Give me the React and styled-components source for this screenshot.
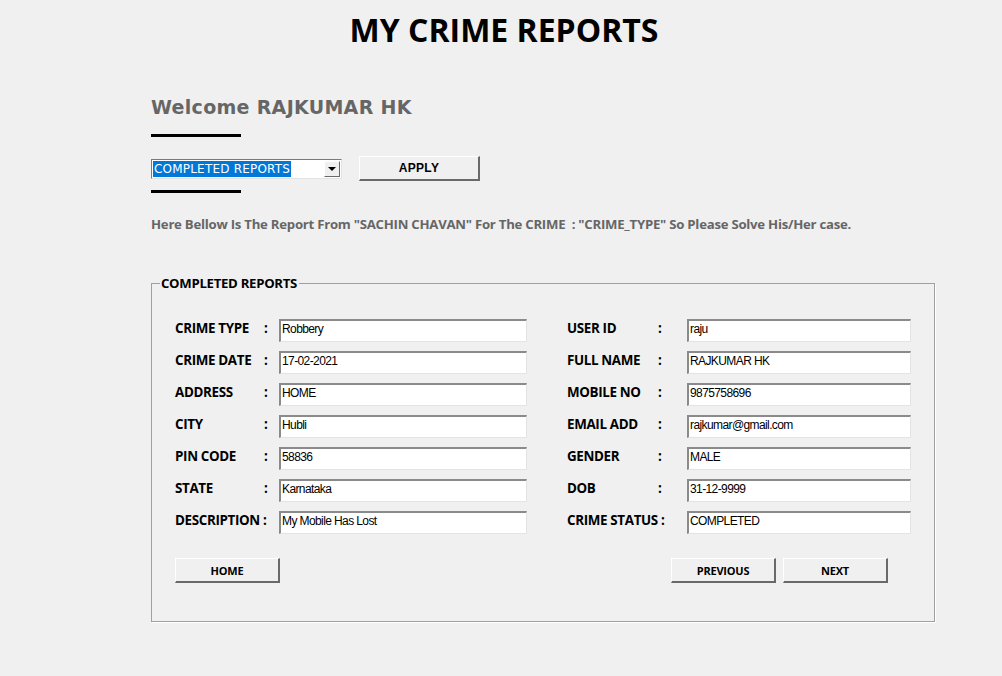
import React from 'react'
import styled, { createGlobalStyle } from 'styled-components'

const GlobalStyle = createGlobalStyle`
  html, body {
    margin: 0;
    padding: 0;
    background: #f0f0f0;
  }
  body {
    width: 1002px;
    height: 676px;
    overflow: hidden;
    font-family: 'Open Sans', 'Noto Sans', sans-serif;
  }
`

const Page = styled.div`
  display: flex;
  flex-direction: column;
  padding: 8px 0 0 151px;
`

const Title = styled.h1`
  margin: 0 0 0 -151px;
  text-align: center;
  font-family: 'Open Sans', sans-serif;
  font-weight: 700;
  font-size: 32px;
  line-height: 44px;
  color: #000;
  padding-left: 6px;
`

const Welcome = styled.h2`
  margin: 44px 0 0 0;
  font-family: 'DejaVu Sans', Verdana, sans-serif;
  font-weight: 700;
  font-size: 19px;
  letter-spacing: 0.3px;
  line-height: 22px;
  color: #666666;
`

const Rule = styled.div`
  width: 90px;
  height: 3px;
  background: #000;
  margin-top: ${p => p.$top}px;
`

const FilterRow = styled.div`
  display: flex;
  align-items: center;
  gap: 17px;
  margin-top: 19px;
`

const Select = styled.div`
  width: 191px;
  height: 20px;
  box-sizing: border-box;
  border: 1px solid #7a7a7a;
  border-right-color: #e3e3e3;
  border-bottom-color: #e3e3e3;
  background: #fff;
  display: flex;
  align-items: center;
  padding: 1px;
`

const Selected = styled.span`
  flex: 1;
  display: flex;
  align-items: center;
  height: 100%;
  span {
    background: #0078d7;
    color: #fff;
    font-family: 'DejaVu Sans', Tahoma, sans-serif;
    font-size: 12px;
    letter-spacing: 0.2px;
    line-height: 16px;
    padding: 0 1px;
  }
`

const Arrow = styled.span`
  width: 16px;
  height: 16px;
  box-sizing: border-box;
  background: #f0f0f0;
  border: 1px solid #fff;
  border-right-color: #696969;
  border-bottom-color: #696969;
  display: flex;
  align-items: center;
  justify-content: center;
  &::after {
    content: '';
    border-left: 4px solid transparent;
    border-right: 4px solid transparent;
    border-top: 4px solid #000;
  }
`

const Button = styled.button`
  width: ${p => p.$w || 105}px;
  height: 25px;
  box-sizing: border-box;
  background: #f0f0f0;
  border: 1px solid #fff;
  border-right: 2px solid #696969;
  border-bottom: 2px solid #696969;
  padding: 0;
  color: #000;
  font-family: ${p => p.$plain ? "'Liberation Sans', Arial, sans-serif" : "'Open Sans', sans-serif"};
  font-weight: 700;
  font-size: ${p => p.$plain ? 12 : 11}px;
  letter-spacing: ${p => p.$plain ? 0.3 : -0.2}px;
  cursor: pointer;
`

const Note = styled.p`
  margin: 22px 0 0 0;
  font-family: 'Open Sans', sans-serif;
  font-weight: 700;
  font-size: 13.2px;
  letter-spacing: -0.25px;
  color: #666666;
  line-height: 18px;
`

const Group = styled.fieldset`
  margin: 41px 0 0 0;
  width: 784px;
  box-sizing: border-box;
  border: 1px solid #a0a0a0;
  box-shadow: 1px 1px 0 #fff;
  padding: 27px 23px 38px 23px;
  min-inline-size: 0;
`

const Legend = styled.legend`
  margin-left: -15px;
  padding: 0 2px 0 1px;
  font-family: 'Open Sans', sans-serif;
  font-weight: 700;
  font-size: 13.2px;
  letter-spacing: -0.3px;
  color: #000;
`

const Columns = styled.div`
  display: flex;
  gap: 40px;
`

const Column = styled.div`
  display: grid;
  grid-template-columns: ${p => p.$cols};
  row-gap: 9px;
  align-items: center;
`

const Label = styled.span`
  font-family: 'Open Sans', sans-serif;
  font-weight: 700;
  font-size: 13.4px;
  letter-spacing: -0.35px;
  color: #000;
  white-space: nowrap;
  line-height: 16px;
  margin-top: -6px;
`

const Colon = styled(Label)`
  margin-left: -2px;
`

const Field = styled.div`
  height: 23px;
  box-sizing: border-box;
  background: #fff;
  border: 1px solid #e3e3e3;
  border-top: 2px solid #8a8a8a;
  border-left: 2px solid #8a8a8a;
  padding: 0 0 0 1px;
  font-family: 'Liberation Sans', Arial, sans-serif;
  font-size: 12px;
  letter-spacing: -0.6px;
  color: #000;
  line-height: 16px;
  white-space: nowrap;
  overflow: hidden;
`

const Actions = styled.div`
  display: flex;
  margin-top: 24px;
`

const Spacer = styled.div`
  flex: 1;
`

const RightButtons = styled.div`
  display: flex;
  gap: 7px;
  margin-right: 23px;
`

const left = [
  ['CRIME TYPE', 'Robbery'],
  ['CRIME DATE', '17-02-2021'],
  ['ADDRESS', 'HOME'],
  ['CITY', 'Hubli'],
  ['PIN CODE', '58836'],
  ['STATE', 'Karnataka'],
  ['DESCRIPTION :', 'My Mobile Has Lost', true],
]

const right = [
  ['USER ID', 'raju'],
  ['FULL NAME', 'RAJKUMAR HK'],
  ['MOBILE NO', '9875758696'],
  ['EMAIL ADD', 'rajkumar@gmail.com'],
  ['GENDER', 'MALE'],
  ['DOB', '31-12-9999'],
  ['CRIME STATUS :', 'COMPLETED', true],
]

const Rows = ({ rows }) =>
  rows.map(([label, value, inline]) => (
    <React.Fragment key={label}>
      {inline ? (
        <Label style={{ gridColumn: 'span 2' }}>{label}</Label>
      ) : (
        <>
          <Label>{label}</Label>
          <Colon>:</Colon>
        </>
      )}
      <Field>{value}</Field>
    </React.Fragment>
  ))

export default function App() {
  return (
    <>
      <GlobalStyle />
      <Page>
        <Title>MY CRIME REPORTS</Title>
        <Welcome>Welcome RAJKUMAR HK</Welcome>
        <Rule $top={16} />
        <FilterRow>
          <Select>
            <Selected><span>COMPLETED REPORTS</span></Selected>
            <Arrow />
          </Select>
          <Button $w={121} $plain>APPLY</Button>
        </FilterRow>
        <Rule $top={9} />
        <Note>
          Here Bellow Is The Report From "SACHIN CHAVAN" For The CRIME&nbsp; : "CRIME_TYPE" So Please Solve His/Her case.
        </Note>
        <Group>
          <Legend>COMPLETED REPORTS</Legend>
          <Columns>
            <Column $cols="91px 13px 248px">
              <Rows rows={left} />
            </Column>
            <Column $cols="93px 27px 224px">
              <Rows rows={right} />
            </Column>
          </Columns>
          <Actions>
            <Button>HOME</Button>
            <Spacer />
            <RightButtons>
              <Button>PREVIOUS</Button>
              <Button>NEXT</Button>
            </RightButtons>
          </Actions>
        </Group>
      </Page>
    </>
  )
}
